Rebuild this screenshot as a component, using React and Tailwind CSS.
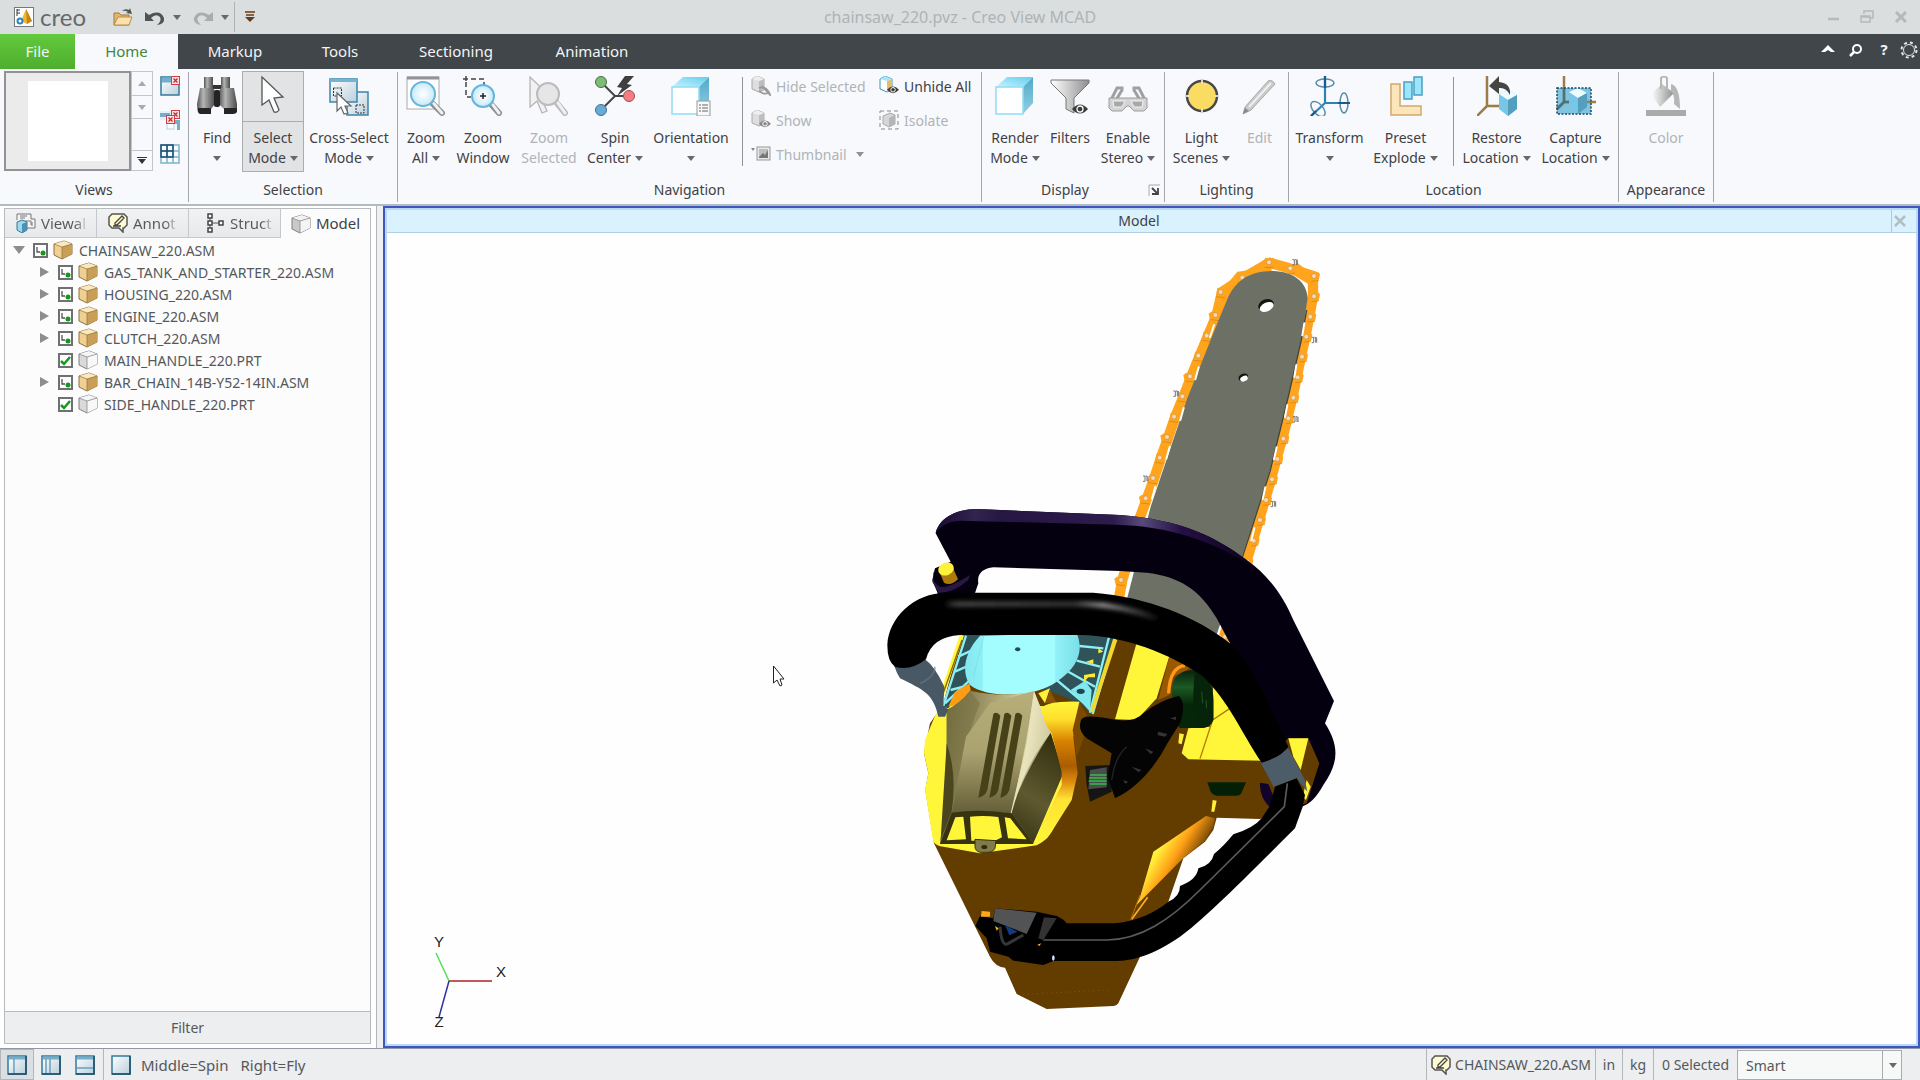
import { useState } from "react";

const tabs = [
  { label: "Markup", width: "w-[114px]" },
  { label: "Tools", width: "w-24" },
  { label: "Sectioning", width: "w-[136px]" },
  { label: "Animation", width: "w-[136px]" },
];

const treeItems = [
  { name: "GAS_TANK_AND_STARTER_220.ASM", type: "asm" },
  { name: "HOUSING_220.ASM", type: "asm" },
  { name: "ENGINE_220.ASM", type: "asm" },
  { name: "CLUTCH_220.ASM", type: "asm" },
  { name: "MAIN_HANDLE_220.PRT", type: "prt" },
  { name: "BAR_CHAIN_14B-Y52-14IN.ASM", type: "asm" },
  { name: "SIDE_HANDLE_220.PRT", type: "prt" },
];

const Gradients = () => (
  <svg className="absolute h-0 w-0" aria-hidden="true">
    <defs>
      <linearGradient id="pane" x1="0" y1="0" x2="1" y2="1">
        <stop offset="0" stopColor="#ffffff" />
        <stop offset="1" stopColor="#b9cfdc" />
      </linearGradient>
      <linearGradient id="metal" x1="0" y1="0" x2="1" y2="0">
        <stop offset="0" stopColor="#555555" />
        <stop offset="0.35" stopColor="#b4b4b4" />
        <stop offset="1" stopColor="#4a4a4a" />
      </linearGradient>
      <linearGradient id="silver" x1="0" y1="0" x2="1" y2="0">
        <stop offset="0" stopColor="#ffffff" />
        <stop offset="1" stopColor="#8f8f8f" />
      </linearGradient>
      <radialGradient id="lens">
        <stop offset="0" stopColor="#ffffff" />
        <stop offset="1" stopColor="#c8eaf8" />
      </radialGradient>
      <linearGradient id="cubeTop" x1="0" y1="1" x2="1" y2="0">
        <stop offset="0" stopColor="#c9f3ff" />
        <stop offset="1" stopColor="#62cdef" />
      </linearGradient>
      <linearGradient id="cubeSide" x1="0" y1="0" x2="0" y2="1">
        <stop offset="0" stopColor="#54a9c6" />
        <stop offset="1" stopColor="#8fd0e6" />
      </linearGradient>
    </defs>
  </svg>
);

const Svg = ({ size = "size-10", box = 40, children }) => (
  <svg className={`${size} shrink-0`} viewBox={`0 0 ${box} ${box}`} fill="none" aria-hidden="true">
    {children}
  </svg>
);

const Arrow = ({ className = "text-[#66686b]" }) => (
  <svg className={`h-[5px] w-2 shrink-0 ${className}`} viewBox="0 0 8 5" aria-hidden="true">
    <path d="M0 0H8L4 5Z" fill="currentColor" />
  </svg>
);

/* ---------- large ribbon icons ---------- */

const FindIcon = () => (
  <Svg>
    <rect x="7" y="1" width="9" height="11" fill="url(#metal)" />
    <rect x="24" y="1" width="9" height="11" fill="url(#metal)" />
    <rect x="16" y="9" width="8" height="4" fill="#333" />
    <path d="M3 12H16Q18 14 18 18V28L14 33V36H1Q0 32 0 28Z" fill="url(#metal)" />
    <path d="M24 12H37L40 28V36H27V33L22 28V18Q22 14 24 12Z" fill="url(#metal)" />
    <rect x="17" y="14" width="6" height="17" rx="2" fill="#242424" />
    <path d="M1 32H14V38H3Q0 37 1 32ZM27 32H40V36Q39 38 36 38H27Z" fill="#252525" />
  </Svg>
);

const CursorIcon = () => (
  <Svg>
    <path d="M9 2V30L16 25L21 37Q24 38 26 35L21 23L30 22Z" fill="#fff" stroke="#555" strokeWidth="1.300" />
  </Svg>
);

const CrossSelectIcon = () => (
  <Svg>
    <rect x="18" y="16" width="21" height="23" fill="url(#pane)" stroke="#3c84ad" strokeWidth="1.500" />
    <rect x="1" y="3" width="27" height="23" fill="url(#pane)" stroke="#3c84ad" strokeWidth="1.500" />
    <path d="M1 4.500H28" stroke="#74b4d2" strokeWidth="3" />
    <rect x="4.500" y="12" width="8" height="8" stroke="#333" strokeDasharray="2 1" />
    <rect x="27" y="29" width="8" height="8" stroke="#333" strokeDasharray="2 1" />
    <path d="M8 17V35L12 31L15 38L19 37L16 30H22Z" fill="#fff" stroke="#666" strokeWidth="1.200" />
  </Svg>
);

const Magnifier = ({ cx = 17, cy = 18, r = 12, gray }) => (
  <>
    <path d={`M${cx + r * 0.7} ${cy + r * 0.7}L36 37`} stroke={gray ? "#bdbdbd" : "#8b8f93"} strokeWidth="6" strokeLinecap="round" />
    <path d={`M${cx + r * 0.9} ${cy + r * 0.8}L36 37`} stroke="#f0f0f0" strokeWidth="3" strokeLinecap="round" />
    <circle cx={cx} cy={cy} r={r} fill={gray ? "#e6e6e6" : "url(#lens)"} stroke={gray ? "#bbb" : "#64b6dd"} strokeWidth="2" />
  </>
);

const ZoomAllIcon = () => (
  <Svg>
    <rect x="1" y="1" width="32" height="32" fill="#fff" stroke="#aaa" />
    <path d="M1 2H33" stroke="#909497" strokeWidth="3" />
    <Magnifier />
  </Svg>
);

const ZoomWindowIcon = () => (
  <Svg>
    <path d="M3 0V6M0 3H21V9M3 6V21H8" stroke="#444" strokeWidth="1.500" strokeDasharray="5 3" />
    <Magnifier cx={20} cy={20} r={11} />
    <path d="M20 17V23M17 20H23" stroke="#222" strokeWidth="1.500" />
  </Svg>
);

const ZoomSelectedIcon = () => (
  <Svg>
    <path d="M1 1V31L8 25L13 37L18 35L13 24H25Z" fill="#f1f1f1" stroke="#b5b5b5" strokeWidth="1.300" />
    <Magnifier cx={19} cy={18} r={11} gray />
  </Svg>
);

const SpinIcon = () => (
  <Svg>
    <path d="M6 6L20 20L6 34M20 20H33" stroke="#444" strokeWidth="2" />
    <circle cx="6" cy="6" r="5.500" fill="#7cbd73" stroke="#4c6b49" />
    <circle cx="6" cy="34" r="5.500" fill="#68abd6" stroke="#456d8a" />
    <circle cx="34" cy="20" r="5.500" fill="#f47d82" stroke="#9f5054" />
    <path d="M30 0L22 11L27 12L22 20L37 9L32 8L39 0Z" fill="#3f3f3f" />
  </Svg>
);

const Cube = () => (
  <>
    <path d="M1 11L12 1H38L28 11Z" fill="url(#cubeTop)" />
    <path d="M28 11L38 1V27L28 38Z" fill="url(#cubeSide)" />
    <rect x="1" y="11" width="27" height="27" fill="#fff" stroke="#93daf5" strokeWidth="1.500" />
  </>
);

const OrientationIcon = () => (
  <Svg>
    <Cube />
    <rect x="26" y="25" width="13" height="15" fill="#f8f8f8" stroke="#999" />
    <path d="M28 29H30M31 29H37M28 32H30M31 32H37M28 35H30M31 35H37" stroke="#666" />
  </Svg>
);

const RenderIcon = () => (
  <Svg>
    <Cube />
  </Svg>
);

const Eye = ({ x = 0, y = 0, gray }) => (
  <g transform={`translate(${x} ${y})`}>
    <path d="M0 5Q8-4 16 5Q8 14 0 5Z" fill={gray ? "#888" : "#3b3b3b"} />
    <circle cx="8" cy="5" r="3" stroke="#fff" strokeWidth="1.300" />
  </g>
);

const FiltersIcon = () => (
  <Svg>
    <path d="M1 4H39V7L24 22V37L16 33V22L1 7Z" fill="url(#silver)" stroke="#777" />
    <Eye x={22} y={28} />
  </Svg>
);

const StereoIcon = () => (
  <Svg>
    <path d="M3 24L9 12H14V14L8 24M37 24L31 12H26V14L32 24" stroke="#a0a0a0" strokeWidth="3" />
    <path d="M1 22H39V32L36 35H26L21 30H19L14 35H4L1 32Z" fill="#d3d3d3" stroke="#9c9c9c" />
    <path d="M5 25H17L14 31H6ZM23 25H35L34 31H26Z" fill="#a8a8a8" stroke="#f4f4f4" />
  </Svg>
);

const LightIcon = () => (
  <Svg>
    <circle cx="20" cy="20" r="15" fill="#fbdc62" stroke="#484848" strokeWidth="2.500" />
    <path d="M20 4V7M20 33V36M4 20H7M33 20H36" stroke="#fff" strokeWidth="1.500" />
  </Svg>
);

const PencilIcon = () => (
  <Svg>
    <path d="M5 31L28 5Q32 3 35 8L11 34L3 38Z" fill="#cacaca" stroke="#aaa" />
    <path d="M9 31L31 7" stroke="#efefef" strokeWidth="2" />
    <path d="M3 38L5 32L9 35Z" fill="#888" />
  </Svg>
);

const TransformIcon = () => (
  <Svg>
    <path d="M15 0V27H40M15 27L1 40" stroke="#2d83b2" strokeWidth="2.200" />
    <ellipse cx="15" cy="7" rx="9" ry="4" stroke="#5b8ba8" strokeWidth="1.500" />
    <ellipse cx="34" cy="27" rx="4" ry="10" stroke="#5b8ba8" strokeWidth="1.500" />
    <ellipse cx="8" cy="33" rx="5" ry="9" stroke="#5b8ba8" strokeWidth="1.500" transform="rotate(-42 8 33)" />
    <path d="M15 0V12M28 27H40M1 40L6 35" stroke="#145d8c" strokeWidth="2.200" />
  </Svg>
);

const ExplodeIcon = () => (
  <Svg>
    <path d="M5 8H14V30H35V39H5Z" fill="#fbe5bb" stroke="#d4a86b" strokeWidth="1.500" />
    <rect x="18" y="6" width="8" height="17" fill="#9ce6fa" stroke="#4aa0c3" strokeWidth="1.500" />
    <rect x="28" y="1" width="8" height="18" fill="#9ce6fa" stroke="#4aa0c3" strokeWidth="1.500" />
  </Svg>
);

const Prism = () => (
  <>
    <path d="M22 18L31 14L40 19V33L31 40L22 33Z" fill="#78c6e6" />
    <path d="M22 18L31 14L40 19L31 24Z" fill="#eefcff" />
    <path d="M31 24L40 19V33L31 40Z" fill="#539fbd" />
  </>
);

const RestoreIcon = () => (
  <Svg>
    <path d="M10 0V30H25M10 30L0 40" stroke="#9c7c48" strokeWidth="2.500" />
    <Prism />
    <path d="M12 10L22 0V6Q34 7 33 19Q29 11 22 12V18Z" fill="#454545" />
  </Svg>
);

const CaptureIcon = () => (
  <Svg>
    <rect x="1" y="12" width="34" height="26" fill="#7fc4e1" />
    <path d="M8 0V26H40M8 26L1 33" stroke="#9c7c48" strokeWidth="2.500" />
    <path d="M8 12V26H18M8 26L1 33" stroke="#4b7477" strokeWidth="2.500" />
    <g transform="translate(-9 -2)">
      <Prism />
    </g>
    <rect x="1" y="12" width="34" height="26" stroke="#174863" strokeWidth="1.500" strokeDasharray="2 1.500" />
  </Svg>
);

const ColorIcon = () => (
  <Svg>
    <path d="M5 18L16 8L28 17L14 31Z" fill="url(#silver)" />
    <path d="M15 13V2Q18-1 21 2V15" stroke="#b6b6b6" strokeWidth="2" />
    <path d="M25 8Q34 10 34 33L28 28Q29 19 25 15Z" fill="#b6b6b6" />
    <rect x="0" y="34" width="40" height="6" fill="#aaaaaa" />
  </Svg>
);

/* ---------- small icons ---------- */

const SmallCube = ({ front = "#efd092", top = "#fbe8bd", side = "#c99e57", line = "#8d713c" }) => (
  <Svg size="size-5" box={20}>
    <path d="M1 4L11 1L19 4V14L9 19L1 15Z" fill={front} stroke={line} />
    <path d="M1 4L11 1L19 4L9 7Z" fill={top} />
    <path d="M9 7L19 4V14L9 19Z" fill={side} />
    <path d="M1 4L9 7V19M9 7L19 4" stroke={line} strokeWidth="0.700" />
  </Svg>
);

const VisibilityIcon = ({ color, kind }) => (
  <Svg size="size-5" box={20}>
    <path d="M1 3L6 0L13 3V14L8 16L1 13Z" fill={color ? "#ffffff" : "#dedede"} stroke={color ? "#3f91ba" : "#aaa"} />
    <path d="M8 5L13 3V14L8 16Z" fill={color ? "#e4bc6b" : "#bdbdbd"} />
    <path d="M1 3L6 0L13 3L8 5Z" fill={color ? "#a7e4fa" : "#eee"} />
    {kind === "hide" ? (
      <path d="M8 12Q14 9 19 18M8 15Q13 19 17 17M11 10L20 20" stroke="#999" strokeWidth="1.800" />
    ) : (
      <g transform="translate(8 10) scale(.75)">
        <Eye gray={!color} />
      </g>
    )}
  </Svg>
);

const IsolateIcon = () => (
  <Svg size="size-5" box={20}>
    <rect x="1" y="1" width="18" height="18" stroke="#888" strokeDasharray="4 3" />
    <path d="M4 6L11 3L16 5V14L10 17L4 14Z" fill="#d6d6d6" stroke="#aaa" />
    <path d="M10 8L16 5V14L10 17Z" fill="#b5b5b5" />
  </Svg>
);

const ThumbnailIcon = () => (
  <Svg size="size-5" box={20}>
    <path d="M0 4H4L2 7Z" fill="#888" />
    <rect x="6" y="3" width="13" height="13" fill="#e9e9e9" stroke="#999" />
    <rect x="8" y="5" width="9" height="9" fill="#bdbdbd" />
    <path d="M8 13L12 9L14 11L17 6V14H8Z" fill="#777" />
  </Svg>
);

const CommentIcon = () => (
  <Svg size="size-5" box={20}>
    <path d="M4 1H16L19 4V12L16 15H15V19L11 15H4L1 12V4Z" fill="#fffbd1" stroke="#555" strokeWidth="1.500" />
    <path d="M14 3L7 10V12H9L16 5ZM5 13H13" stroke="#444" strokeWidth="1.300" />
  </Svg>
);

const PaneIcon = ({ d, top = true }) => (
  <Svg size="size-5" box={20}>
    <rect x="1" y="1" width="18" height="18" fill="url(#pane)" stroke="#34799c" strokeWidth="1.500" />
    {top && <path d="M2 3H18" stroke="#75aeca" strokeWidth="3" />}
    {d && <path d={d} stroke="#6aa1bb" strokeWidth="1.500" />}
    <path d="M19 1V19H1" stroke="#1d4e66" strokeWidth="1.500" />
  </Svg>
);

const CloseBadge = ({ x, y }) => (
  <g transform={`translate(${x} ${y})`}>
    <rect x="0.500" y="0.500" width="8" height="8" fill="#fbe3e3" stroke="#d13f45" />
    <path d="M2.500 2.500L6.500 6.500M6.500 2.500L2.500 6.500" stroke="#c8252d" strokeWidth="1.200" />
  </g>
);

const DocTabIcon = () => (
  <Svg size="size-5" box={20}>
    <path d="M1 7V1H15V6H19V15H11" fill="#f5f5f5" stroke="#777" />
    <path d="M4 3H11M4 5H9M9 8H15V12M16 9V13" stroke="#777" />
    <path d="M1 9L6 7L11 9V17L6 20L1 17Z" fill="#9cd9ee" stroke="#397895" />
    <path d="M6 11L11 9V17L6 20Z" fill="#4b91b0" />
  </Svg>
);

const StructureIcon = () => (
  <Svg size="size-5" box={20}>
    <path d="M5 3V17M5 10H14" stroke="#555" />
    <path d="M3 1H7V5H3ZM3 8H7V12H3ZM3 15H7V19H3ZM14 8H18V12H14Z" fill="#fff" stroke="#444" strokeWidth="1.500" />
  </Svg>
);

/* ---------- ribbon ---------- */

const Tool = ({ icon, lines, arrow, width, disabled }) => (
  <button
    type="button"
    disabled={disabled}
    className={`${width} flex h-[101px] shrink-0 flex-col items-center pt-[5px] leading-5 whitespace-nowrap ${
      disabled ? "text-[#b1b3b6]" : "text-[#3f4144]"
    }`}
  >
    {icon}
    <span className="mt-3">{lines[0]}</span>
    <span className="flex h-5 items-center gap-1">
      {lines[1]}
      {arrow && <Arrow />}
    </span>
  </button>
);

const SmallTool = ({ icon, label, disabled, arrow }) => (
  <button
    type="button"
    disabled={disabled}
    className={`flex h-5 items-center gap-[5px] whitespace-nowrap ${disabled ? "text-[#b1b3b6]" : "text-[#3f4144]"}`}
  >
    {icon}
    <span>{label}</span>
    {arrow && (
      <span className="ml-1">
        <Arrow className="text-[#8f9194]" />
      </span>
    )}
  </button>
);

const Group = ({ label, width, children, corner }) => (
  <section
    aria-label={label}
    className={`${width} mt-[3px] flex h-[130px] shrink-0 flex-col border-r border-[#a3a6aa]`}
  >
    <div className="-mt-px flex h-[101px] justify-center">{children}</div>
    <div className={`relative mt-2 text-center leading-5 ${corner ? "pr-4" : ""}`}>
      {label}
      {corner}
    </div>
  </section>
);

const GroupRule = ({ className }) => <div className={`${className} mt-[6px] h-[89px] w-px shrink-0 bg-[#8f9296]`} />;

const Ribbon = () => (
  <div className="flex h-[137px] shrink-0 overflow-hidden border-b-2 border-[#b3bcbd] bg-[#f7f9fd] text-[#3f4144]">
    <Group label="Views" width="w-[189px]">
      <button
        type="button"
        aria-label="View thumbnail"
        className="flex h-[100px] w-[127px] items-center justify-center border-2 border-[#929292] bg-[#ebebec]"
      >
        <span className="size-20 bg-white" />
      </button>
      <div className="flex h-[100px] w-[22px] flex-col border border-[#c3c5c8]">
        <button type="button" aria-label="Previous view" className="flex h-6 items-center justify-center border-b border-[#c3c5c8]">
          <Arrow className="rotate-180 text-[#aaa]" />
        </button>
        <button type="button" aria-label="Next view" className="flex h-[23px] items-center justify-center border-b border-[#c3c5c8]">
          <Arrow className="text-[#aaa]" />
        </button>
        <div className="grow" />
        <button type="button" aria-label="More views" className="flex h-5 flex-col items-center justify-center gap-px border-t border-[#c3c5c8]">
          <span className="h-px w-2.5 bg-[#333]" />
          <Arrow className="text-[#333]" />
        </button>
      </div>
      <div className="mr-1 ml-[7px] flex flex-col gap-[14px] pt-[5px]">
        <button type="button" aria-label="Close view">
          <Svg size="size-5" box={20}>
            <rect x="1" y="1" width="18" height="18" fill="url(#pane)" stroke="#34799c" strokeWidth="1.500" />
            <path d="M2 4H18" stroke="#75aeca" strokeWidth="5" />
            <CloseBadge x={11} y={0} />
          </Svg>
        </button>
        <button type="button" aria-label="Close all views">
          <Svg size="size-5" box={20}>
            <path d="M0 1H12V10H0Z" fill="#e5f0f6" />
            <path d="M0 5H10M12 12H19V20" stroke="#75aeca" strokeWidth="4" />
            <rect x="7" y="12" width="7" height="7" fill="#fff" stroke="#b6d2df" />
            <CloseBadge x={11} y={0} />
            <CloseBadge x={6} y={5} />
          </Svg>
        </button>
        <button type="button" aria-label="Tile views">
          <Svg size="size-5" box={20}>
            <path d="M1 1H19V19H1ZM1 7H19M1 13H19M7 1V19M13 1V19" stroke="#7fb2cc" strokeWidth="1.500" />
            <path d="M1 1H13V13H1ZM1 7H13M7 1V13" stroke="#184f70" strokeWidth="1.500" />
          </Svg>
        </button>
      </div>
    </Group>

    <Group label="Selection" width="w-[209px]">
      <Tool icon={<FindIcon />} lines={["Find"]} arrow width="w-[50px]" />
      <button
        type="button"
        className="flex h-[101px] w-[62px] shrink-0 flex-col items-center border border-[#aaacaf] bg-[#e2e3e5] leading-5"
      >
        <span className="flex h-[50px] w-full justify-center border-b border-[#aaacaf] pt-[3px]">
          <CursorIcon />
        </span>
        <span className="mt-1.5">Select</span>
        <span className="flex items-center gap-1">
          Mode
          <Arrow />
        </span>
      </button>
      <Tool icon={<CrossSelectIcon />} lines={["Cross-Select", "Mode"]} arrow width="w-[90px]" />
    </Group>

    <Group label="Navigation" width="w-[584px]">
      <Tool icon={<ZoomAllIcon />} lines={["Zoom", "All"]} arrow width="w-12" />
      <Tool icon={<ZoomWindowIcon />} lines={["Zoom", "Window"]} width="w-[66px]" />
      <Tool icon={<ZoomSelectedIcon />} lines={["Zoom", "Selected"]} width="w-[66px]" disabled />
      <Tool icon={<SpinIcon />} lines={["Spin", "Center"]} arrow width="w-[66px]" />
      <Tool icon={<OrientationIcon />} lines={["Orientation"]} arrow width="w-[86px]" />
      <GroupRule className="ml-2" />
      <div className="ml-2 grid grid-cols-[128px_98px] content-start gap-y-[14px] pt-[5px]">
        <SmallTool icon={<VisibilityIcon kind="hide" />} label="Hide Selected" disabled />
        <SmallTool icon={<VisibilityIcon color />} label="Unhide All" />
        <SmallTool icon={<VisibilityIcon />} label="Show" disabled />
        <SmallTool icon={<IsolateIcon />} label="Isolate" disabled />
        <SmallTool icon={<ThumbnailIcon />} label="Thumbnail" disabled arrow />
      </div>
    </Group>

    <Group
      label="Display"
      width="w-[183px]"
      corner={
        <button type="button" aria-label="Display options" className="absolute top-1 right-1">
          <Svg size="size-3" box={12}>
            <path d="M1 12V1H12" stroke="#aaa" />
            <path d="M4 4L9 9M10 4V10H4" stroke="#444" strokeWidth="1.800" />
          </Svg>
        </button>
      }
    >
      <Tool icon={<RenderIcon />} lines={["Render", "Mode"]} arrow width="w-[58px]" />
      <Tool icon={<FiltersIcon />} lines={["Filters"]} width="w-[52px]" />
      <Tool icon={<StereoIcon />} lines={["Enable", "Stereo"]} arrow width="w-16" />
    </Group>

    <Group label="Lighting" width="w-[124px]">
      <Tool icon={<LightIcon />} lines={["Light", "Scenes"]} arrow width="w-[66px]" />
      <Tool icon={<PencilIcon />} lines={["Edit"]} width="w-[50px]" disabled />
    </Group>

    <Group label="Location" width="w-[330px]">
      <Tool icon={<TransformIcon />} lines={["Transform"]} arrow width="w-[74px]" />
      <Tool icon={<ExplodeIcon />} lines={["Preset", "Explode"]} arrow width="w-[78px]" />
      <GroupRule className="mr-[3px] ml-2" />
      <Tool icon={<RestoreIcon />} lines={["Restore", "Location"]} arrow width="w-20" />
      <Tool icon={<CaptureIcon />} lines={["Capture", "Location"]} arrow width="w-[78px]" />
    </Group>

    <Group label="Appearance" width="w-[95px]">
      <Tool icon={<ColorIcon />} lines={["Color"]} width="w-16" disabled />
    </Group>
  </div>
);

/* ---------- header ---------- */

const TitleBar = () => (
  <header className="grid h-[34px] shrink-0 grid-cols-[1fr_auto_1fr] items-center bg-[#dadedf]">
    <div className="flex items-center">
      <div className="ml-3.5 flex items-center gap-1.5">
        <Svg size="size-5" box={20}>
          <rect x="0.500" y="0.500" width="19" height="19" fill="#fff" stroke="#777" />
          <path d="M12 2L18 14L13 17L7 14Z" fill="#f2b632" />
          <path d="M12 2L18 14L13 17Z" fill="#c98315" />
          <path d="M3 2V9M3 3H6M3 6H6" stroke="#333" />
          <circle cx="6" cy="14" r="2.500" stroke="#2b87c2" strokeWidth="2" />
        </Svg>
        <span className="w-[51px] font-['Lato'] text-2xl leading-6 text-[#65696b]">creo</span>
      </div>
      <button type="button" aria-label="Open" className="ml-[22px]">
        <Svg size="size-5" box={20}>
          <path d="M1 18V6H6L8 8H16V18Z" fill="#e1b56c" stroke="#a77a3a" />
          <path d="M1 18L5 10H19L16 18Z" fill="#fae1ad" stroke="#bd8d49" />
          <path d="M9 4Q12 1 16 3L17 1L19 7L13 6L15 5Q12 3 9 4Z" fill="#555" />
        </Svg>
      </button>
      <button type="button" aria-label="Undo" className="ml-3">
        <Svg size="size-5" box={20}>
          <path d="M0 5V14H9L6 11Q11 6 15 10Q17 14 12 18Q20 17 19 11Q15 2 4 8Z" fill="#505254" />
        </Svg>
      </button>
      <button type="button" aria-label="Undo history" className="ml-2">
        <Arrow />
      </button>
      <button type="button" aria-label="Redo" className="ml-3 -scale-x-100">
        <Svg size="size-5" box={20}>
          <path d="M0 5V14H9L6 11Q11 6 15 10Q17 14 12 18Q20 17 19 11Q15 2 4 8Z" fill="#a9adae" />
        </Svg>
      </button>
      <button type="button" aria-label="Redo history" className="ml-2">
        <Arrow />
      </button>
      <span className="ml-[5px] h-[30px] w-px bg-[#aeb2b3]" />
      <button type="button" aria-label="Customize toolbar" className="ml-2.5">
        <svg className="h-3 w-2.5" viewBox="0 0 10 12" aria-hidden="true">
          <path d="M0 1H10M1 4H9" stroke="#6b3a14" strokeWidth="1.500" />
          <path d="M0 6H10L5 11Z" fill="#6b3a14" />
        </svg>
      </button>
    </div>
    <h1 className="text-base leading-5 text-[#b0b3b4]">chainsaw_220.pvz - Creo View MCAD</h1>
    <div className="flex items-center justify-end gap-5 pr-3 text-[#b6b9ba]">
      <button type="button" aria-label="Minimize">
        <Svg size="size-3" box={12}>
          <path d="M0 8H11" stroke="currentColor" strokeWidth="2.500" />
        </Svg>
      </button>
      <button type="button" aria-label="Restore">
        <Svg size="size-3.5" box={14}>
          <path d="M4 4V1H13V8H10M1 6H10V12H1ZM1 7H10" stroke="currentColor" strokeWidth="1.500" />
        </Svg>
      </button>
      <button type="button" aria-label="Close">
        <Svg size="size-3.5" box={14}>
          <path d="M2 2L12 12M12 2L2 12" stroke="currentColor" strokeWidth="3" />
        </Svg>
      </button>
    </div>
  </header>
);

const MenuBar = () => (
  <nav className="flex h-[35px] shrink-0 items-stretch bg-[#41464a] text-[15px] text-[#f3f4f5]">
    <button type="button" className="w-[75px] bg-linear-to-b from-[#63c93d] to-[#4eae2f]">File</button>
    <button type="button" className="w-[103px] bg-[#f7f9fd] text-[#46853a]">Home</button>
    {tabs.map((tab) => (
      <button key={tab.label} type="button" className={tab.width}>
        {tab.label}
      </button>
    ))}
    <div className="ml-auto flex items-center pb-1">
      <button type="button" aria-label="Collapse ribbon" className="flex w-7 justify-center">
        <Svg size="size-3.5" box={14}>
          <path d="M0 9L7 2L14 9H10L7 7L4 9Z" fill="#fff" />
        </Svg>
      </button>
      <button type="button" aria-label="Search" className="flex w-7 justify-center">
        <Svg size="size-3.5" box={14}>
          <circle cx="8" cy="6" r="4" stroke="#fff" strokeWidth="2" />
          <path d="M5 9L1 13" stroke="#fff" strokeWidth="2.500" />
        </Svg>
      </button>
      <button type="button" className="w-7 font-bold">?</button>
      <button type="button" aria-label="Settings" className="flex w-[22px] justify-center">
        <Svg size="size-[18px]" box={18}>
          <circle cx="9" cy="9" r="5.500" stroke="#e3e5e6" />
          <circle cx="9" cy="9" r="7.500" stroke="#e3e5e6" strokeWidth="2" strokeDasharray="3 3" />
        </Svg>
      </button>
    </div>
  </nav>
);

/* ---------- model tree ---------- */

const TreeRow = ({ name, type, root }) => {
  const [checked, setChecked] = useState(true);

  return (
    <li className={`flex h-[22px] items-center ${root ? "pl-2" : "pl-[33px]"}`}>
      <span className="flex w-5 shrink-0 justify-start">
        {type === "asm" && (
          <button type="button" aria-label={`Toggle ${name}`}>
            <Svg size="size-3" box={12}>
              <path d={root ? "M0 2H12L6 10Z" : "M2 1L11 6L2 11Z"} fill="#8b8d8f" />
            </Svg>
          </button>
        )}
      </span>
      <label className="flex items-center whitespace-nowrap">
        <span className="grid size-[15px] place-items-center">
          <input
            type="checkbox"
            checked={checked}
            onChange={() => setChecked(!checked)}
            className="col-start-1 row-start-1 size-[15px] appearance-none border-2 border-[#6e7173] bg-white"
          />
          <svg className="pointer-events-none col-start-1 row-start-1 size-[15px]" viewBox="0 0 15 15" fill="none">
            {checked && type === "prt" && <path d="M3 8L6 11L12 4" stroke="#159a1c" strokeWidth="2.500" />}
            {checked && type === "asm" && (
              <>
                <path d="M4 4V9H7" stroke="#555" strokeWidth="1.300" />
                <circle cx="10" cy="10" r="2.500" fill="#18951d" />
              </>
            )}
          </svg>
        </span>
        <span className="mr-1.5 ml-[5px]">
          {type === "asm" ? <SmallCube /> : <SmallCube front="#d9d9d9" top="#f5f5f5" side="#f8f8f8" line="#808080" />}
        </span>
        {name}
      </label>
    </li>
  );
};

const ModelPanel = () => (
  <aside className="flex w-[377px] shrink-0 flex-col border-r border-[#b1b5b9] bg-white py-[2px] pr-[5px] pb-1 pl-1 text-[#55585b]">
    <div className="flex grow flex-col border border-[#b8bbbe] bg-[#fcfcfc]">
      <div className="flex h-[29px] shrink-0 text-[15px]">
        {[
          { name: "Viewables", label: "Viewal", icon: <DocTabIcon />, pad: "pl-[11px]" },
          { name: "Annotations", label: "Annot", icon: <CommentIcon />, pad: "pl-[11px]" },
          { name: "Structure", label: "Struct", icon: <StructureIcon />, pad: "pl-4" },
        ].map((tab) => (
          <button
            key={tab.name}
            type="button"
            aria-label={tab.name}
            className={`${tab.pad} flex w-[92px] items-center gap-[5px] border-r border-b border-[#c6c9cc] bg-linear-to-b from-[#f1f2f3] to-[#e7e9eb]`}
          >
            {tab.icon}
            <span className="bg-linear-to-r from-[#55585b] from-75% to-[#d0d2d4] bg-clip-text text-transparent">{tab.label}</span>
          </button>
        ))}
        <button type="button" className="flex grow items-center justify-center gap-[5px] text-[#3f4144]">
          <SmallCube front="#c9c9c9" top="#f3f3f3" side="#f4f4f4" line="#808080" />
          Model
        </button>
      </div>
      <ul className="grow pt-px">
        <TreeRow name="CHAINSAW_220.ASM" type="asm" root />
        {treeItems.map((item) => (
          <TreeRow key={item.name} name={item.name} type={item.type} />
        ))}
      </ul>
      <button type="button" className="h-8 shrink-0 border-t border-[#b8bbbe] bg-[#eceef0]">Filter</button>
    </div>
  </aside>
);

/* ---------- 3D view ---------- */

const leftPins = [
  [1167, -683], [1087, -637], [1022, -594], [1006, -525], [980, -463], [955, -403], [930, -341], [907, -281],
  [882, -220], [861, -159], [839, -97], [819, -36], [797, 25], [770, 98], [750, 180], [723, 270], [712, 330],
];
const rightPins = [
  [1167, -683], [1231, -665], [1302, -642], [1302, -581], [1291, -520], [1279, -460], [1266, -400], [1253, -338],
  [1240, -277], [1225, -215], [1210, -154], [1192, -93], [1176, -32], [1158, 30], [1140, 90], [1121, 152],
  [1102, 215], [1035, 440],
];
const teeth = [[888, -289], [797, -34], [1245, -683], [1303, -450], [1247, -212], [1180, 42]];
const gaps = [
  [1002, -495, 990], [956, -368, 946], [911, -246, 901], [869, -130, 859], [826, -10, 816],
  [1273, -500, 1267], [1249, -375, 1243], [1222, -255, 1215], [1190, -128, 1182], [1156, -8, 1148], [1123, 115, 1114],
];

const Chain = () => (
  <g>
    <path d="M1022-594L1072-655L1175-668V-650L1095-622L1050-580L1020-500L990-500Z" fill="#ffa41c" />
    <path d="M1231-665L1252-682L1302-642L1290-615L1235-648Z" fill="#ffa41c" />
    {[leftPins, rightPins].map((pins, i) => (
      <g key={i}>
        <polyline
          points={pins.map(([x, y]) => (i ? [x - 3, y] : [x + 4, y])).join(" ")}
          fill="none"
          stroke="#ffa41c"
          strokeWidth="31"
          strokeLinejoin="round"
        />
        {pins.map(([x, y], n) => (
          <g key={n} transform={`translate(${x} ${y})`}>
            <path
              d={i ? "M-12-14L12-12L18-6L14 14L-12 14Z" : n % 3 ? "M14-14L-10-12L-14 12L12 15Z" : "M14-14L-12-10L-20-4L-16 14L12 15Z"}
              fill="#ffa41c"
            />
            <path d={i ? "M-8 16L14 14" : "M-14 14L12 17"} fill="none" stroke="#8e5a12" strokeWidth="1" />
            <circle r="7" fill="#f6d9b5" stroke="#9b7040" strokeWidth="1" />
          </g>
        ))}
      </g>
    ))}
    {teeth.map(([x, y]) => (
      <path key={y} d={`M${x - 8} ${y - 8}h6v16h-6M${x} ${y - 8}h4v16M${x + 7} ${y - 8}v16`} stroke="#777173" strokeWidth="3" fill="none" />
    ))}
  </g>
);

const Chainsaw = () => (
  <g transform="translate(880 490) scale(.33333)">
    <defs>
      <linearGradient id="guardEdge" gradientUnits="userSpaceOnUse" x1="168" y1="0" x2="1150" y2="0">
        <stop offset="0" stopColor="#1a0b35" />
        <stop offset="0.120" stopColor="#33234f" />
        <stop offset="0.200" stopColor="#261644" />
        <stop offset="0.540" stopColor="#2c1b4b" />
        <stop offset="0.630" stopColor="#574a7b" />
        <stop offset="0.750" stopColor="#251044" />
        <stop offset="1" stopColor="#080014" />
      </linearGradient>
      <linearGradient id="shine" gradientUnits="userSpaceOnUse" x1="180" y1="0" x2="850" y2="0">
        <stop offset="0" stopColor="#000" />
        <stop offset="0.080" stopColor="#444" />
        <stop offset="0.600" stopColor="#333" />
        <stop offset="0.730" stopColor="#8a8a8a" />
        <stop offset="1" stopColor="#000" />
      </linearGradient>
      <filter id="soft" x="-10%" y="-100%" width="120%" height="300%">
        <feGaussianBlur stdDeviation="6" />
      </filter>
      <linearGradient id="khaki" gradientUnits="userSpaceOnUse" x1="200" y1="650" x2="520" y2="700">
        <stop offset="0" stopColor="#6b6535" />
        <stop offset="0.250" stopColor="#91895a" />
        <stop offset="0.550" stopColor="#bdb583" />
        <stop offset="0.800" stopColor="#f1edcb" />
        <stop offset="1" stopColor="#9b9463" />
      </linearGradient>
      <linearGradient id="khakiFront" x1="0" y1="0" x2="0" y2="1">
        <stop offset="0" stopColor="#b7ae7a" />
        <stop offset="0.500" stopColor="#aaa26f" />
        <stop offset="1" stopColor="#655e38" />
      </linearGradient>
      <linearGradient id="khakiDark" x1="0.600" y1="0" x2="0.300" y2="1">
        <stop offset="0" stopColor="#34300f" />
        <stop offset="0.600" stopColor="#5e592f" />
        <stop offset="1" stopColor="#3b3616" />
      </linearGradient>
      <linearGradient id="arm" x1="0" y1="0" x2="0" y2="1">
        <stop offset="0" stopColor="#fff63a" />
        <stop offset="0.120" stopColor="#ffe02c" />
        <stop offset="0.280" stopColor="#d88000" />
        <stop offset="0.450" stopColor="#a95d00" />
        <stop offset="0.560" stopColor="#e08c10" />
        <stop offset="0.680" stopColor="#ffe233" />
        <stop offset="1" stopColor="#fff63a" />
      </linearGradient>
      <linearGradient id="flank" gradientUnits="userSpaceOnUse" x1="830" y1="1090" x2="930" y2="1150">
        <stop offset="0" stopColor="#fff03a" />
        <stop offset="0.450" stopColor="#ff9e16" />
        <stop offset="1" stopColor="#633c00" />
      </linearGradient>
      <linearGradient id="cap" x1="0" y1="0" x2="0" y2="1">
        <stop offset="0" stopColor="#08220a" />
        <stop offset="0.300" stopColor="#1c5a24" />
        <stop offset="0.600" stopColor="#06260a" />
      </linearGradient>
      <linearGradient id="fan" x1="0" y1="0" x2="1" y2="0">
        <stop offset="0" stopColor="#84e8ef" />
        <stop offset="0.150" stopColor="#8ff0f6" />
        <stop offset="0.160" stopColor="#a3fdff" />
        <stop offset="0.780" stopColor="#a3fdff" />
        <stop offset="0.790" stopColor="#92f1f8" />
        <stop offset="1" stopColor="#7bdfe8" />
      </linearGradient>
    </defs>

    {/* bar and chain */}
    <Chain />
    <path d="M735 350L812 50L922-275L1012-500L1045-580C1070-630 1110-657 1180-657C1240-655 1280-625 1283-575L1265-460L1226-290L1170-60L1088 195L1005 450Z" fill="#6d7165" />
    <path d="M1280-540L1264-450L1226-285L1170-55L1062 280" fill="none" stroke="#3b4440" strokeWidth="4" />
    {gaps.map(([x, y, x2]) => (
      <path key={y} d={`M${x} ${y}L${x2} ${y + 36}`} stroke="#fff" strokeWidth="6" strokeLinecap="round" />
    ))}
    <ellipse cx="1158" cy="-555" rx="24" ry="17" fill="#15150f" transform="rotate(-22 1158 -555)" />
    <ellipse cx="1160" cy="-549" rx="22" ry="13" fill="#fff" transform="rotate(-25 1160 -549)" />
    <ellipse cx="1090" cy="-338" rx="15" ry="11" fill="#15150f" transform="rotate(-22 1090 -338)" />
    <ellipse cx="1092" cy="-334" rx="12" ry="8" fill="#fff" transform="rotate(-25 1092 -334)" />

    {/* chain guard */}
    <path d="M167 130C175 90 220 58 290 57L720 75C900 90 1000 135 1100 210C1170 260 1210 320 1240 390L1362 633L1335 700C1380 770 1375 820 1330 885Q1300 940 1265 950L1225 880L1100 620L1050 460L1010 385C960 300 900 260 800 248L720 243L340 232C310 235 290 250 295 280L283 315H175L157 270L165 235L212 215Z" fill="#05000f" />
    <path d="M167 130C175 90 220 58 290 57L720 75C900 90 1000 135 1100 210L1130 238C1000 150 860 108 710 104L240 92C205 94 185 105 167 130Z" fill="url(#guardEdge)" />
    <path d="M165 235Q150 270 172 285Q190 305 270 255L265 270Q220 310 175 308L157 275Z" fill="#291744" />
    <path d="M176 240L192 278Q212 290 234 268L218 232Z" fill="#ad7a0e" />
    <ellipse cx="198" cy="237" rx="24" ry="19" fill="#fff03a" transform="rotate(-20 198 237)" />

    {/* engine body */}
    <path d="M245 430H700L900 500L1000 570L1150 815L1225 745H1285L1318 820L1280 940L1140 987L1010 983L1000 1020L975 1055L910 1105L865 1235L780 1400L715 1540Q710 1548 700 1548L500 1557L410 1512L375 1433Q345 1430 330 1400L162 1060L136 900L145 850L132 790L150 700L188 640Z" fill="#633c00" />
    <path d="M190 430H245L190 640L150 700L170 640Z" fill="#fefefe" />
    <path d="M240 432L252 437L192 617L180 612Z" fill="#fff63a" />
    <path d="M246 450L187 617" stroke="#8c6200" strokeWidth="4" />
    <path d="M168 670L135 750L132 790L145 850L135 900L160 1055Q170 1068 190 1070L300 1090L470 1066Q500 1050 515 1025L560 940L550 650L210 640Z" fill="#fff63a" />

    {/* starter fan */}
    <path d="M255 430H690L705 445L632 672L600 640L500 600L270 580L205 655L188 650L215 560Z" fill="#2f5358" />
    <path d="M258 437L190 648M688 437L630 668M705 445L638 672" stroke="#8cf0f7" strokeWidth="7" fill="none" />
    <path d="M235 500L300 470M225 545L270 525M195 640L270 570M598 468L670 475M590 512L660 530M565 545L645 590M530 570L625 650M212 600L250 590" stroke="#8cf0f7" strokeWidth="7" />
    <path d="M572 600L615 572L635 600L630 665Z" fill="#80e8ee" />
    <ellipse cx="602" cy="604" rx="12" ry="8" fill="#22454a" />
    <path d="M618 515L640 508V522ZM612 555L645 550V562H625L612 575ZM655 475L670 485L655 490Z" fill="#ffe838" />
    <path d="M205 650L225 605L268 580L272 600L255 640Z" fill="#ff9c16" />
    <path d="M475 610L510 595L495 640Z" fill="#fff03a" />
    <path d="M510 600L530 640H495Z" fill="#8a5500" />
    <path d="M300 437C250 490 245 550 270 585C320 625 460 625 530 575C600 530 610 475 590 430Z" fill="url(#fan)" />
    <path d="M280 560L312 437" stroke="#78dbe2" strokeWidth="2" />
    <ellipse cx="413" cy="478" rx="8" ry="6" fill="#204d52" />

    {/* muffler cover */}
    <path d="M270 602Q380 625 462 603L512 728L550 850L460 1060L180 1062L200 900L200 660Q240 640 270 602Z" fill="url(#khaki)" />
    <path d="M270 602L300 640Q250 760 215 970L180 1062L200 900V660Q240 640 270 602Z" fill="#7a7346" opacity=".6" />
    <path d="M200 760Q232 850 215 965L182 1050Z" fill="#4b461e" />
    <path d="M258 740L330 640L462 603L440 760L392 970Q300 960 215 970Z" fill="url(#khakiFront)" />
    <path d="M512 728L550 850L460 1060L395 970Q430 830 512 728Z" fill="url(#khakiDark)" />
    <path d="M462 603L512 728Q450 820 400 940Q440 760 462 603Z" fill="#e5dfb6" opacity=".7" />
    {[0, 33, 66].map((dx) => (
      <path key={dx} transform={`translate(${dx} 0)`} d="M340 672Q350 662 361 677L322 900Q315 920 295 923Z" fill="#474119" />
    ))}
    <path d="M215 968Q300 955 396 970L462 1062L180 1062Z" fill="#37320f" />
    <path d="M226 982L250 980L258 1048L200 1051ZM270 980Q310 975 355 981L366 1042L345 1052H274ZM374 982L391 985L440 1048L384 1045Z" fill="#fff63a" />
    <path d="M285 1048L348 1052L345 1075Q338 1088 320 1087H300Q285 1082 285 1070Z" fill="#817a4c" stroke="#37320f" strokeWidth="3" />
    <ellipse cx="313" cy="1071" rx="9" ry="6" fill="#302b0b" />
    <path d="M485 655Q500 632 598 635L603 700L580 740L593 850L575 930L512 1030Q495 1060 458 1065L495 985L545 885L545 845L515 730Q485 690 485 655Z" fill="url(#arm)" />
    <path d="M598 637L620 675L600 700L612 742L590 800L578 720Z" fill="#7b4a00" />

    {/* tank and air box */}
    <path d="M770 458L870 492L830 625L770 690L705 688Z" fill="#fff63a" />
    <path d="M700 445L712 450L640 668L630 665Z" fill="#f4d92d" />
    <path d="M870 492L930 535L880 560L868 615L835 630Z" fill="#9a5800" />
    <path d="M915 527Q870 530 866 610" fill="none" stroke="#ff9916" strokeWidth="10" />
    <path d="M1000 585L1050 640L1148 812L925 808L905 790L925 715L990 710Z" fill="#fff63a" />
    <path d="M1050 655L998 690L960 806" fill="none" stroke="#b27d00" strokeWidth="4" />
    <path d="M898 730L912 733L905 763L895 760ZM998 930L1010 932L1003 965L994 965Z" fill="#fff03a" />
    <path d="M1225 745H1285L1262 840L1240 800Z" fill="#fff63a" />
    <path d="M1280 870L1292 890L1278 930L1268 920Z" fill="#fff63a" />
    <path d="M877 590Q885 540 945 540Q1000 560 1000 630V690Q990 715 960 714H900Q875 690 877 590Z" fill="url(#cap)" />
    <path d="M945 542Q1000 560 1000 630V690Q990 715 960 714Q930 680 945 542Z" fill="#062409" />
    <path d="M965 605L968 640M978 630L980 655" stroke="#37663a" strokeWidth="2" />
    <path d="M982 877H1098L1084 910Q1080 917 1070 917H1008Q998 915 992 905Z" fill="#031f05" />
    <path d="M1140 878L1165 882L1185 930L1168 950Q1138 920 1140 878Z" fill="#12032b" />

    {/* throttle and carburettor */}
    <path d="M616 828L695 825V905L630 935L620 885Z" fill="#151515" />
    <path d="M630 840L680 832V892L625 898Z" fill="#4a4d4c" />
    <path d="M630 855H680M627 864H680M626 873H680M630 882H680" stroke="#39b94a" strokeWidth="4" />
    <path d="M603 690Q612 672 680 685Q760 703 790 670Q840 630 897 618Q920 640 900 700L865 755Q800 880 705 925L683 860L695 790L620 745Q592 720 603 690Z" fill="#040404" />
    <path d="M870 685L888 680V690ZM835 725L862 732L855 740L832 735ZM795 775L820 785L813 793ZM755 830L785 840L775 846ZM730 870L745 876L735 881Z" fill="#343434" />
    <path d="M695 870Q705 800 740 770" stroke="#242424" strokeWidth="4" fill="none" />

    {/* rear grip */}
    <path d="M978 978L820 1085L780 1222L765 1250L910 1104L975 1052L1000 1010L1005 985Z" fill="url(#flank)" />
    <path d="M803 1222L755 1288" stroke="#ffb020" strokeWidth="5" />
    <path d="M780 1215L752 1290" stroke="#c17500" strokeWidth="3" />
    <path d="M43 528L135 508Q165 530 193 590L190 648L205 658L195 680H175C160 610 130 600 60 565Q50 550 43 528Z" fill="#485864" />
    <path d="M120 580Q165 560 165 530" stroke="#6d7d88" strokeWidth="5" opacity=".6" fill="none" />
    <path d="M1140 815L1225 775L1275 870L1282 905L1250 865L1180 890Q1165 860 1140 815Z" fill="#4d5c69" />
    <path d="M1250 865L1275 915L1268 950L1245 1015C1100 1160 960 1300 900 1340C820 1395 760 1413 700 1413H520L490 1425L400 1412L385 1400L330 1385L320 1345L286 1308L300 1278L340 1285L345 1255L470 1265L530 1278Q555 1290 560 1300H700C770 1295 830 1265 865 1235Q900 1220 900 1188Q950 1170 955 1135Q995 1125 1002 1092Q1030 1070 1060 1033Q1120 1015 1145 985L1168 950L1185 890Z" fill="#000" />
    <path d="M1222 880L1213 950L960 1200C870 1290 780 1350 680 1350H490" fill="none" stroke="#5c5c5c" strokeWidth="5" />
    <path d="M345 1255L470 1268L440 1332L340 1293Z" fill="#525355" />
    <path d="M492 1282L530 1285L490 1350L475 1345Z" fill="#333" />
    <path d="M375 1305L412 1325L388 1336Z" fill="#123b82" />
    <path d="M360 1310Q365 1375 385 1360L430 1335" fill="none" stroke="#353637" strokeWidth="9" />
    <path d="M305 1263L330 1265V1280H303Z" fill="#ffa81c" />
    <path d="M345 1308L356 1315L350 1322ZM472 1364L484 1360L478 1368Z" fill="#ffb31c" />
    <ellipse cx="520" cy="1404" rx="4" ry="8" fill="#c6e5f5" />
    <path d="M430 1513L690 1500" stroke="#8f7b3d" strokeWidth="2" strokeDasharray="2 12" />

    {/* front handle */}
    <path d="M45 530Q22 515 22 465C25 385 100 308 200 308H640C800 320 950 380 1050 460C1120 530 1150 610 1225 770Q1205 800 1145 818C1080 720 1050 640 970 560C870 490 730 437 600 435H240Q155 440 138 508Q90 545 45 530Z" fill="#000" />
    <path d="M200 342H620Q720 345 830 385" fill="none" stroke="url(#shine)" strokeWidth="16" filter="url(#soft)" />
  </g>
);

const Viewer = () => (
  <main className="flex min-w-0 grow flex-col border-2 border-[#3f55c0] bg-[#b9d7f7] p-[2px]">
    <div className="flex h-[23px] shrink-0 items-stretch border-b border-[#b1cfe0] bg-[#d9f2fd] text-[#3f4144]">
      <h2 className="grow text-center leading-[22px]">Model</h2>
      <button type="button" aria-label="Close model view" className="flex w-[25px] items-center border-l border-[#a9c9dc] pl-px">
        <Svg size="size-3.5" box={14}>
          <path d="M2 2L12 12M12 2L2 12" stroke="#b0bfc6" strokeWidth="2.500" />
        </Svg>
      </button>
    </div>
    <svg className="min-h-0 w-full grow bg-[#fefefe]" viewBox="387 233 1529 811" role="img" aria-label="Chainsaw model">
      <Chainsaw />
      <g fill="none" strokeWidth="1.500">
        <path d="M436 953L449 981" stroke="#55e055" />
        <path d="M449 981H492" stroke="#b0202a" />
        <path d="M449 981L439 1017" stroke="#3030a8" />
      </g>
      <g className="font-['Liberation_Sans'] text-[15px]" fill="#222" textAnchor="middle">
        <text x="439" y="947">Y</text>
        <text x="501" y="977">X</text>
        <text x="439" y="1027">Z</text>
      </g>
      <path d="M773.500 666V683L777 680L780 686L782 685L780 679H784Z" fill="#fff" stroke="#222" />
    </svg>
  </main>
);

/* ---------- status bar ---------- */

const StatusBar = () => (
  <footer className="flex h-8 shrink-0 items-stretch border-t border-[#9297a5] bg-[#eceef0] text-[#55585b]">
    <button type="button" aria-label="Toggle side panel" className="w-[34px] border border-[#b3b6ba] bg-[#dcdfe2] pl-1.5">
      <PaneIcon d="M7 4V18" />
    </button>
    <button type="button" aria-label="Toggle columns" className="w-[34px] pl-[7px]">
      <PaneIcon d="M5 4V18M9 4V18" />
    </button>
    <button type="button" aria-label="Toggle bottom panel" className="w-[34px] pl-[7px]">
      <PaneIcon d="M2 13H18" />
    </button>
    <button type="button" aria-label="Full view" className="ml-px border-l border-[#b3b6ba] pl-[7px]">
      <PaneIcon top={false} />
    </button>
    <p className="ml-2.5 flex items-center gap-3 pt-px text-[15px]">
      <span>Middle=Spin</span>
      <span>Right=Fly</span>
    </p>
    <div className="ml-auto flex items-center border-l border-[#b3b6ba] pr-1 pl-1">
      <CommentIcon />
      <span className="ml-1">CHAINSAW_220.ASM</span>
    </div>
    <span className="flex w-[27px] items-center justify-center border-l border-[#b3b6ba]">in</span>
    <span className="flex w-[31px] items-center justify-center border-l border-[#b3b6ba]">kg</span>
    <span className="flex w-[84px] items-center justify-center border-l border-[#b3b6ba]">0 Selected</span>
    <div className="mr-[18px] grid w-[165px]">
      <select
        aria-label="Selection filter"
        className="col-start-1 row-start-1 mt-px appearance-none border border-[#a9acaf] bg-[#f7f8f8] pl-2"
        defaultValue="Smart"
      >
        <option>Smart</option>
        <option>Part</option>
      </select>
      <span className="pointer-events-none col-start-1 row-start-1 mt-px flex w-5 items-center justify-center justify-self-end border-l border-[#a9acaf]">
        <Arrow />
      </span>
    </div>
  </footer>
);

const App = () => {
  return (
    <div className="flex h-screen flex-col overflow-hidden bg-[#eef0f2] font-['Noto_Sans',sans-serif] text-[14px]">
      <Gradients />
      <TitleBar />
      <MenuBar />
      <Ribbon />
      <div className="flex min-h-0 grow gap-1.5">
        <ModelPanel />
        <Viewer />
      </div>
      <StatusBar />
    </div>
  );
};

export default App;
